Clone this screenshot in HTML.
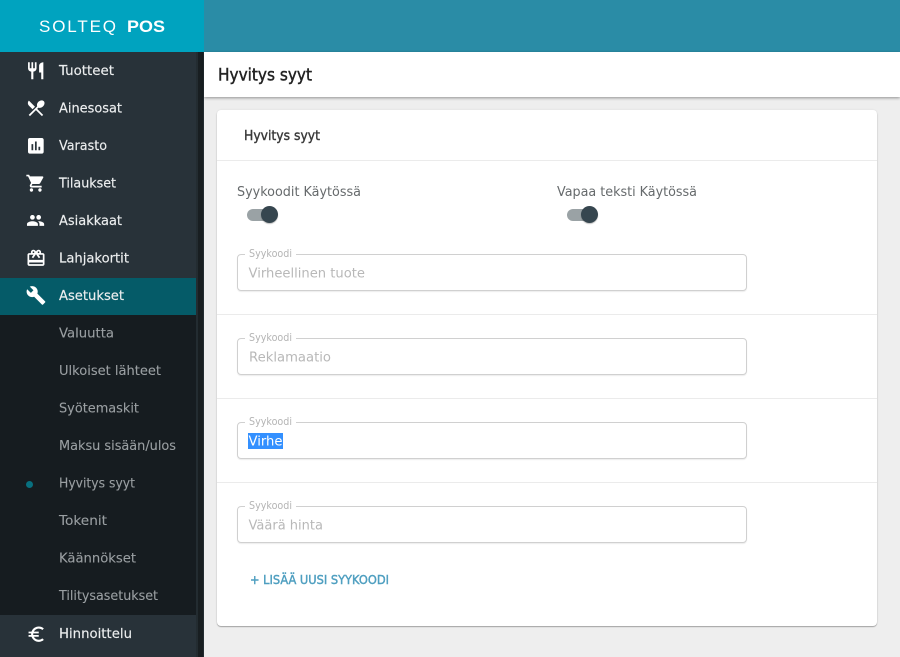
<!DOCTYPE html>
<html lang="fi"><head><meta charset="utf-8"><title>Hyvitys syyt</title>
<style>
html,body{margin:0;padding:0;width:900px;height:657px;overflow:hidden;background:#eeeeee}
div{position:absolute;box-sizing:border-box}
svg{position:absolute;left:0;top:0}
text{font-family:"DejaVu Sans","Liberation Sans",sans-serif;font-size:13px}
.m{fill:#eceeef;stroke:#eceeef;stroke-width:.15}.s{fill:#9a9fa2;stroke:#9a9fa2;stroke-width:.1}.l{fill:#666a6c}.h{fill:#b4b4b4;font-size:10.5px}.v{fill:#b8b8b8}
.ic{fill:#fff}
</style></head><body>
<div style="left:204px;top:0;width:696px;height:52px;background:#2a8ca6"></div>
<div style="left:0;top:0;width:204px;height:52px;background:#00a3bf"></div>
<div style="left:0;top:52px;width:204px;height:605px;background:#283239"></div>
<div style="left:0;top:315px;width:196px;height:300px;background:#161c20"></div>
<div style="left:0;top:278px;width:196px;height:37px;background:#055b68"></div>
<div style="left:196px;top:52px;width:8px;height:605px;background:#232c31"></div>
<div style="left:198px;top:52px;width:5px;height:605px;background:#181e21"></div>
<div style="left:204px;top:52px;width:696px;height:45px;background:#fff;box-shadow:0 1px 3px rgba(0,0,0,.4)"></div>
<div style="left:217px;top:110px;width:660px;height:516px;background:#fff;border-radius:4px;box-shadow:0 1px 1px rgba(0,0,0,.3),0 0 2px rgba(0,0,0,.08)"></div>
<div style="left:217px;top:160px;width:660px;height:1px;background:#ebebeb"></div>
<div style="left:217px;top:314px;width:660px;height:1px;background:#ebebeb"></div>
<div style="left:217px;top:398px;width:660px;height:1px;background:#ebebeb"></div>
<div style="left:217px;top:482px;width:660px;height:1px;background:#ebebeb"></div>
<div style="left:237px;top:254px;width:510px;height:37px;border:1px solid #d0d0d0;border-radius:4px;box-shadow:0 1px 1px rgba(0,0,0,.08)"></div>
<div style="left:237px;top:338px;width:510px;height:37px;border:1px solid #d0d0d0;border-radius:4px;box-shadow:0 1px 1px rgba(0,0,0,.08)"></div>
<div style="left:237px;top:422px;width:510px;height:37px;border:1px solid #d0d0d0;border-radius:4px;box-shadow:0 1px 1px rgba(0,0,0,.08)"></div>
<div style="left:237px;top:506px;width:510px;height:37px;border:1px solid #d0d0d0;border-radius:4px;box-shadow:0 1px 1px rgba(0,0,0,.08)"></div>
<div style="left:245px;top:252px;width:51px;height:4px;background:#fff"></div>
<div style="left:245px;top:336px;width:51px;height:4px;background:#fff"></div>
<div style="left:245px;top:420px;width:51px;height:4px;background:#fff"></div>
<div style="left:245px;top:504px;width:51px;height:4px;background:#fff"></div>
<div style="left:248px;top:433px;width:35px;height:16px;background:#3390ff"></div>
<div style="left:246.5px;top:208.5px;width:24px;height:12px;background:#9aa2a5;border-radius:6px"></div>
<div style="left:260.5px;top:206px;width:17px;height:17px;background:#36464f;border-radius:50%;box-shadow:0 1px 1px rgba(0,0,0,.25)"></div>
<div style="left:566.5px;top:208.5px;width:24px;height:12px;background:#9aa2a5;border-radius:6px"></div>
<div style="left:580.5px;top:206px;width:17px;height:17px;background:#36464f;border-radius:50%;box-shadow:0 1px 1px rgba(0,0,0,.25)"></div>
<div style="left:25.5px;top:480.5px;width:7px;height:7px;background:#08707f;border-radius:50%"></div>
<svg width="900" height="657" viewBox="0 0 900 657" xmlns="http://www.w3.org/2000/svg">
<text x="39" y="32" fill="#fff" style="font-family:'Liberation Sans',sans-serif;font-size:17px" textLength="77" lengthAdjust="spacing">SOLTEQ</text>
<text x="127" y="32" fill="#fff" font-weight="700" style="font-family:'Liberation Sans',sans-serif;font-size:17px" textLength="38" lengthAdjust="spacingAndGlyphs">POS</text>

<g class="ic">
<path transform="translate(25.5 60.6) scale(.85)" d="M11 9H9V2H7v7H5V2H3v7c0 2.12 1.66 3.84 3.75 3.97V22h2.5v-9.03C11.34 12.84 13 11.12 13 9V2h-2v7zm5-3v8h2.5v8H21V2c-2.76 0-5 2.24-5 4z"/>
<path transform="translate(25.5 97.6) scale(.87)" d="M8.1 13.34l2.83-2.83L3.91 3.5c-1.56 1.56-1.56 4.09 0 5.66l4.19 4.18zm6.78-1.81c1.53.71 3.68.21 5.27-1.38 1.91-1.91 2.28-4.65.81-6.12-1.46-1.46-4.2-1.1-6.12.81-1.59 1.59-2.09 3.74-1.38 5.27L3.7 19.87l1.41 1.41L12 14.41l6.88 6.88 1.41-1.41L13.41 13l1.47-1.47z"/>
<path transform="translate(25.4 135.4) scale(.87)" d="M19 3H5c-1.1 0-2 .9-2 2v14c0 1.1.9 2 2 2h14c1.1 0 2-.9 2-2V5c0-1.1-.9-2-2-2zM9 17H7v-7h2v7zm4 0h-2V7h2v10zm4 0h-2v-4h2v4z"/>
<path transform="translate(25.5 173) scale(.85)" d="M7 18c-1.1 0-1.99.9-1.99 2S5.9 22 7 22s2-.9 2-2-.9-2-2-2zM1 2v2h2l3.6 7.59-1.35 2.45c-.16.28-.25.61-.25.96 0 1.1.9 2 2 2h12v-2H7.42c-.14 0-.25-.11-.25-.25l.03-.12.9-1.63h7.45c.75 0 1.41-.41 1.75-1.03l3.58-6.49c.08-.14.12-.31.12-.48 0-.55-.45-1-1-1H5.21l-.94-2H1zm16 16c-1.1 0-1.99.9-1.99 2s.89 2 1.99 2 2-.9 2-2-.9-2-2-2z"/>
<path transform="translate(26.2 211.1) scale(.78)" d="M16 11c1.66 0 2.99-1.34 2.99-3S17.66 5 16 5c-1.66 0-3 1.34-3 3s1.34 3 3 3zm-8 0c1.66 0 2.99-1.34 2.99-3S9.66 5 8 5C6.34 5 5 6.34 5 8s1.34 3 3 3zm0 2c-2.33 0-7 1.17-7 3.5V19h14v-2.5c0-2.33-4.67-3.5-7-3.5zm8 0c-.29 0-.62.02-.97.05 1.16.84 1.97 1.97 1.97 3.45V19h6v-2.5c0-2.33-4.67-3.5-7-3.5z"/>
<path transform="translate(25.8 248) scale(.85)" d="M20 6h-2.18c.11-.31.18-.65.18-1 0-1.66-1.34-3-3-3-1.05 0-1.96.54-2.5 1.35l-.5.67-.5-.68C10.96 2.54 10.05 2 9 2 7.34 2 6 3.34 6 5c0 .35.07.69.18 1H4c-1.11 0-1.99.89-1.99 2L2 19c0 1.11.89 2 2 2h16c1.11 0 2-.89 2-2V8c0-1.11-.89-2-2-2zm-5-2c.55 0 1 .45 1 1s-.45 1-1 1-1-.45-1-1 .45-1 1-1zM9 4c.55 0 1 .45 1 1s-.45 1-1 1-1-.45-1-1 .45-1 1-1zm11 15H4v-2h16v2zm0-5H4V8h5.08L7 10.83 8.62 12 11 8.76l1-1.36 1 1.36L15.38 12 17 10.83 14.92 8H20v6z"/>
<path transform="translate(25.8 285.2) scale(.85)" d="M22.7 19l-9.1-9.1c.9-2.3.4-5-1.5-6.9-2-2-5-2.4-7.4-1.3L9 6 6 9 1.6 4.7C.4 7.1.9 10.1 2.9 12.1c1.9 1.9 4.6 2.4 6.9 1.5l9.1 9.1c.4.4 1 .4 1.4 0l2.3-2.3c.5-.4.5-1.1.1-1.4z"/>
<path transform="translate(26 624) scale(.85)" d="M15 18.5c-2.51 0-4.68-1.42-5.76-3.5H15v-2H8.58c-.05-.33-.08-.66-.08-1s.03-.67.08-1H15V9H9.24C10.32 6.92 12.5 5.5 15 5.5c1.61 0 3.09.59 4.23 1.57L21 5.3C19.41 3.87 17.3 3 15 3c-3.92 0-7.24 2.51-8.48 6H3v2h3.06c-.04.33-.06.66-.06 1s.02.67.06 1H3v2h3.52c1.24 3.49 4.56 6 8.48 6 2.31 0 4.41-.87 6-2.3l-1.78-1.77c-1.13.98-2.6 1.57-4.22 1.57z"/>
</g>

<text class="m" x="59" y="75" textLength="55" lengthAdjust="spacingAndGlyphs">Tuotteet</text>
<text class="m" x="59" y="112.5" textLength="63" lengthAdjust="spacingAndGlyphs">Ainesosat</text>
<text class="m" x="59" y="150" textLength="48" lengthAdjust="spacingAndGlyphs">Varasto</text>
<text class="m" x="59" y="187.5" textLength="57" lengthAdjust="spacingAndGlyphs">Tilaukset</text>
<text class="m" x="59" y="225" textLength="63" lengthAdjust="spacingAndGlyphs">Asiakkaat</text>
<text class="m" x="59" y="262.5" textLength="70" lengthAdjust="spacingAndGlyphs">Lahjakortit</text>
<text class="m" x="59" y="300" textLength="65" lengthAdjust="spacingAndGlyphs">Asetukset</text>
<text class="s" x="59" y="337.5" textLength="55" lengthAdjust="spacingAndGlyphs">Valuutta</text>
<text class="s" x="59" y="375" textLength="102" lengthAdjust="spacingAndGlyphs">Ulkoiset lähteet</text>
<text class="s" x="59" y="412.5" textLength="80" lengthAdjust="spacingAndGlyphs">Syötemaskit</text>
<text class="s" x="59" y="450" textLength="117" lengthAdjust="spacingAndGlyphs">Maksu sisään/ulos</text>
<text class="s" x="59" y="487.5" textLength="76" lengthAdjust="spacingAndGlyphs">Hyvitys syyt</text>
<text class="s" x="59" y="525" textLength="48" lengthAdjust="spacingAndGlyphs">Tokenit</text>
<text class="s" x="59" y="562.5" textLength="77" lengthAdjust="spacingAndGlyphs">Käännökset</text>
<text class="s" x="59" y="600" textLength="99" lengthAdjust="spacingAndGlyphs">Tilitysasetukset</text>
<text class="m" x="59" y="638" textLength="73" lengthAdjust="spacingAndGlyphs">Hinnoittelu</text>

<text x="218" y="80.5" fill="#222" stroke="#222" stroke-width=".45" style="font-size:17px" textLength="94" lengthAdjust="spacingAndGlyphs">Hyvitys syyt</text>
<text x="244" y="140" fill="#3a3a3a" stroke="#3a3a3a" stroke-width=".4" style="font-size:13.5px" textLength="76" lengthAdjust="spacingAndGlyphs">Hyvitys syyt</text>
<text class="l" x="237" y="196" textLength="124" lengthAdjust="spacingAndGlyphs">Syykoodit Käytössä</text>
<text class="l" x="557" y="196" textLength="140" lengthAdjust="spacingAndGlyphs">Vapaa teksti Käytössä</text>

<text class="h" x="249" y="257" textLength="43" lengthAdjust="spacingAndGlyphs">Syykoodi</text>
<text class="h" x="249" y="341" textLength="43" lengthAdjust="spacingAndGlyphs">Syykoodi</text>
<text class="h" x="249" y="425" textLength="43" lengthAdjust="spacingAndGlyphs">Syykoodi</text>
<text class="h" x="249" y="509" textLength="43" lengthAdjust="spacingAndGlyphs">Syykoodi</text>

<text class="v" x="248.5" y="277.5" textLength="116.5" lengthAdjust="spacingAndGlyphs">Virheellinen tuote</text>
<text class="v" x="249" y="361.5" textLength="82" lengthAdjust="spacingAndGlyphs">Reklamaatio</text>
<text x="248.5" y="445.5" fill="#fff" textLength="34" lengthAdjust="spacingAndGlyphs">Virhe</text>
<text class="v" x="248.5" y="529.5" textLength="74.5" lengthAdjust="spacingAndGlyphs">Väärä hinta</text>

<text x="250" y="584" fill="#4f9fc0" stroke="#4f9fc0" stroke-width=".45" style="font-size:12px" textLength="139" lengthAdjust="spacingAndGlyphs">+ LISÄÄ UUSI SYYKOODI</text>
</svg>
</body></html>
